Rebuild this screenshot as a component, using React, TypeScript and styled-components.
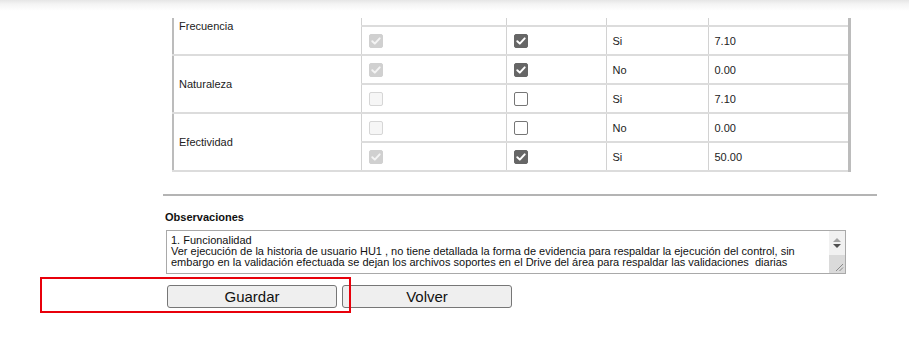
import React from "react";
import styled, { createGlobalStyle } from "styled-components";

const GlobalStyle = createGlobalStyle`
  html, body {
    margin: 0;
    padding: 0;
    background: #ffffff;
    font-family: "Liberation Sans", Arial, sans-serif;
  }
`;

const Page = styled.div`
  position: relative;
  width: 909px;
  height: 340px;
  overflow: hidden;
  background: #fff;
`;

const TopShade = styled.div`
  height: 18px;
  background: linear-gradient(#e6e6e6 0px, #f4f4f4 4px, #ffffff 11px);
`;

const Main = styled.div`
  margin-left: 163px;
  width: 714px;
`;

const TableClip = styled.div`
  margin-left: 9px;
  width: 679px;
  height: 154px;
  overflow: hidden;
`;

const Grid = styled.table`
  margin-top: -22px;
  width: 679px;
  border-collapse: collapse;
  table-layout: fixed;
  border-left: 2px solid #bcbcbc;
  border-right: 3px solid #bcbcbc;
  border-bottom: 2px solid #bcbcbc;
  font-size: 11px;
  color: #222;
`;

const Cell = styled.td<{ $first?: boolean }>`
  height: 27px;
  padding: 0 0 0 ${(p) => (p.$first ? "5px" : "6px")};
  border-top: 2px solid #dcdcdc;
  border-bottom: 2px solid #dcdcdc;
  border-left: 1px solid #d2d2d2;
  border-right: 1px solid #d2d2d2;
  vertical-align: middle;
  white-space: nowrap;
`;

const LabelCell = styled(Cell)`
  padding-bottom: 1px;
`;

const Box = styled.span<{ $checked?: boolean; $disabled?: boolean }>`
  display: block;
  box-sizing: border-box;
  width: 14px;
  height: 14px;
  margin-left: 1px;
  border-radius: 2px;
  border: 1px solid
    ${(p) =>
      p.$disabled
        ? p.$checked
          ? "#d0d0d0"
          : "#d6d6d6"
        : p.$checked
        ? "#666666"
        : "#767676"};
  background: ${(p) =>
    p.$disabled
      ? p.$checked
        ? "#d0d0d0"
        : "#f6f6f6"
      : p.$checked
      ? "#666666"
      : "#ffffff"};
  svg {
    display: block;
  }
`;

const Rule = styled.div`
  margin-top: 22px;
  height: 0;
  border-top: 2px solid #b4b4b4;
`;

const Label = styled.div`
  margin: 15px 0 0 2px;
  font-size: 11px;
  font-weight: bold;
  color: #111;
  line-height: 13px;
`;

const NotesFrame = styled.div`
  display: flex;
  box-sizing: border-box;
  margin: 6px 0 0 3px;
  width: 680px;
  height: 44px;
  border: 1px solid #a9a9a9;
  background: #fff;
`;

const Notes = styled.textarea`
  flex: 1;
  box-sizing: border-box;
  height: 100%;
  margin: 0;
  padding: 4px 4px 0 4px;
  border: none;
  font-family: "Liberation Sans", Arial, sans-serif;
  font-size: 11px;
  line-height: 11px;
  color: #111;
  resize: none;
  overflow: hidden;
  outline: none;
`;

const ScrollCol = styled.div`
  position: relative;
  width: 16px;
  display: flex;
  flex-direction: column;
  background: #f1f1f1;
`;

const Arrow = styled.div<{ $down?: boolean; $muted?: boolean }>`
  height: ${(p) => (p.$down ? "8px" : "13px")};
  display: flex;
  justify-content: center;
  align-items: ${(p) => (p.$down ? "flex-start" : "flex-end")};
  padding-bottom: ${(p) => (p.$down ? "0" : "2px")};
  box-sizing: border-box;
  &::before {
    content: "";
    width: 0;
    height: 0;
    border-left: 4px solid transparent;
    border-right: 4px solid transparent;
    ${(p) =>
      p.$down
        ? `border-top: 4px solid ${p.$muted ? "#a3a3a3" : "#505050"};`
        : `border-bottom: 4px solid ${p.$muted ? "#a3a3a3" : "#505050"};`}
  }
`;

const Thumb = styled.div`
  flex: 1;
  margin-top: 3px;
  background: #dadada;
`;

const Grip = styled.svg`
  position: absolute;
  right: 1px;
  bottom: 1px;
`;

const Actions = styled.div`
  display: flex;
  gap: 5px;
  margin: 11px 0 0 4px;
`;

const Button = styled.button`
  width: 170px;
  height: 23px;
  padding: 0;
  background: #efefef;
  border: 1px solid #767676;
  border-radius: 3px;
  font-family: "Liberation Sans", Arial, sans-serif;
  font-size: 15px;
  color: #111;
`;

const Highlight = styled.div`
  position: absolute;
  left: 40px;
  top: 277px;
  width: 311px;
  height: 36px;
  box-sizing: border-box;
  border: 2px solid #e8000b;
  pointer-events: none;
`;

type Row = {
  label?: string;
  span?: number;
  prev?: boolean;
  curr?: boolean;
  answer?: string;
  score?: string;
  hidden?: boolean;
};

const rows: Row[] = [
  { label: "Frecuencia", span: 2, hidden: true },
  { prev: true, curr: true, answer: "Si", score: "7.10" },
  { label: "Naturaleza", span: 2, prev: true, curr: true, answer: "No", score: "0.00" },
  { prev: false, curr: false, answer: "Si", score: "7.10" },
  { label: "Efectividad", span: 2, prev: false, curr: false, answer: "No", score: "0.00" },
  { prev: true, curr: true, answer: "Si", score: "50.00" },
];

const Check: React.FC<{ checked: boolean; disabled?: boolean }> = ({ checked, disabled }) => (
  <Box $checked={checked} $disabled={disabled}>
    {checked && (
      <svg width="12" height="12" viewBox="0 0 12 12">
        <path
          d="M2.3 6.2 L4.8 8.6 L9.7 3.4"
          fill="none"
          stroke={disabled ? "#f4f4f4" : "#ffffff"}
          strokeWidth="2"
          strokeLinecap="round"
          strokeLinejoin="round"
        />
      </svg>
    )}
  </Box>
);

const notes =
  "1. Funcionalidad\nVer ejecución de la historia de usuario HU1 , no tiene detallada la forma de evidencia para respaldar la ejecución del control, sin embargo en la validación efectuada se dejan los archivos soportes en el Drive del área para respaldar las validaciones  diarias";

const App: React.FC = () => {
  return (
    <Page>
      <GlobalStyle />
      <TopShade />
      <Main>
        <TableClip>
          <Grid>
            <colgroup>
              <col style={{ width: 188 }} />
              <col style={{ width: 145 }} />
              <col style={{ width: 100 }} />
              <col style={{ width: 102 }} />
              <col />
            </colgroup>
            <tbody>
              {rows.map((r, i) => (
                <tr key={i}>
                  {r.label && (
                    <LabelCell $first rowSpan={r.span}>
                      {r.label}
                    </LabelCell>
                  )}
                  <Cell>{!r.hidden && <Check checked={!!r.prev} disabled />}</Cell>
                  <Cell>{!r.hidden && <Check checked={!!r.curr} />}</Cell>
                  <Cell>{r.answer}</Cell>
                  <Cell>{r.score}</Cell>
                </tr>
              ))}
            </tbody>
          </Grid>
        </TableClip>
        <Rule />
        <Label>Observaciones</Label>
        <NotesFrame>
          <Notes readOnly value={notes} />
          <ScrollCol>
            <Arrow $muted />
            <Arrow $down />
            <Thumb />
            <Grip width="10" height="10" viewBox="0 0 10 10">
              <path d="M9 2 L2 9 M9 5.5 L5.5 9" stroke="#8a8a8a" strokeWidth="1" fill="none" />
            </Grip>
          </ScrollCol>
        </NotesFrame>
        <Actions>
          <Button>Guardar</Button>
          <Button>Volver</Button>
        </Actions>
      </Main>
      <Highlight />
    </Page>
  );
};

export default App;
